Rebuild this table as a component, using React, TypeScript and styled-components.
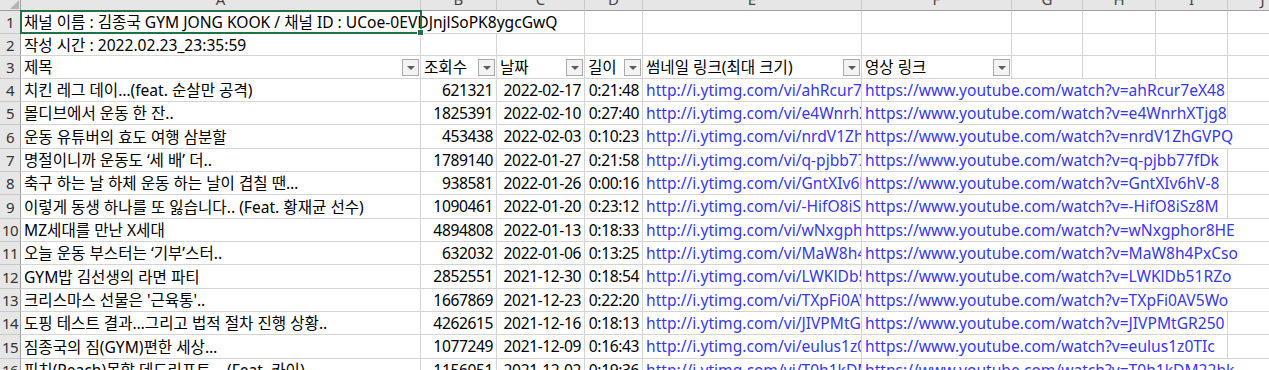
import * as React from "react";
import styled, { createGlobalStyle } from "styled-components";

const GlobalStyle = createGlobalStyle`
  html, body {
    margin: 0;
    padding: 0;
    background: #fff;
    overflow: hidden;
  }
  body {
    font-family: "Noto Sans", "Noto Sans CJK KR", sans-serif;
    font-size: 15.6px;
    color: #000;
  }
`;

const COLUMNS = [
  { key: "A", width: 400 },
  { key: "B", width: 76 },
  { key: "C", width: 88 },
  { key: "D", width: 58 },
  { key: "E", width: 219 },
  { key: "F", width: 150 },
  { key: "G", width: 71 },
  { key: "H", width: 73 },
  { key: "I", width: 72 },
  { key: "J", width: 70 },
];

const ROW_HEIGHTS = [23, 22, 23, ...Array.from({ length: 14 }, (_, i) => [23, 23, 24][i % 3])];

const GRID_COLUMNS = `21px ${COLUMNS.map((c) => `${c.width}px`).join(" ")}`;
const GRID_ROWS = `11px ${ROW_HEIGHTS.map((h) => `${h}px`).join(" ")}`;

type Video = {
  title: string;
  views: string;
  date: string;
  length: string;
  id: string;
};

const VIDEOS: Video[] = [
  { title: "치킨 레그 데이…(feat. 순살만 공격)", views: "621321", date: "2022-02-17", length: "0:21:48", id: "ahRcur7eX48" },
  { title: "몰디브에서 운동 한 잔..", views: "1825391", date: "2022-02-10", length: "0:27:40", id: "e4WnrhXTjg8" },
  { title: "운동 유튜버의 효도 여행 삼분할", views: "453438", date: "2022-02-03", length: "0:10:23", id: "nrdV1ZhGVPQ" },
  { title: "명절이니까 운동도 ‘세 배’ 더..", views: "1789140", date: "2022-01-27", length: "0:21:58", id: "q-pjbb77fDk" },
  { title: "축구 하는 날 하체 운동 하는 날이 겹칠 땐…", views: "938581", date: "2022-01-26", length: "0:00:16", id: "GntXIv6hV-8" },
  { title: "이렇게 동생 하나를 또 잃습니다.. (Feat. 황재균 선수)", views: "1090461", date: "2022-01-20", length: "0:23:12", id: "-HifO8iSz8M" },
  { title: "MZ세대를 만난 X세대", views: "4894808", date: "2022-01-13", length: "0:18:33", id: "wNxgphor8HE" },
  { title: "오늘 운동 부스터는 ‘기부’스터..", views: "632032", date: "2022-01-06", length: "0:13:25", id: "MaW8h4PxCso" },
  { title: "GYM밥 김선생의 라면 파티", views: "2852551", date: "2021-12-30", length: "0:18:54", id: "LWKlDb51RZo" },
  { title: "크리스마스 선물은 '근육통'..", views: "1667869", date: "2021-12-23", length: "0:22:20", id: "TXpFi0AV5Wo" },
  { title: "도핑 테스트 결과…그리고 법적 절차 진행 상황..", views: "4262615", date: "2021-12-16", length: "0:18:13", id: "JIVPMtGR250" },
  { title: "짐종국의 짐(GYM)편한 세상…", views: "1077249", date: "2021-12-09", length: "0:16:43", id: "eulus1z0TIc" },
  { title: "피치(Peach)못할 데드리프트… (Feat. 카이)", views: "1156051", date: "2021-12-02", length: "0:19:36", id: "T0h1kDM22bk" },
];

const HEADERS = ["제목", "조회수", "날짜", "길이", "썸네일 링크(최대 크기)", "영상 링크"];

const Sheet = styled.div`
  display: grid;
  grid-template-columns: ${GRID_COLUMNS};
  grid-template-rows: ${GRID_ROWS};
  width: 1269px;
  height: 370px;
  overflow: hidden;
  background: #fff;
`;

const Corner = styled.div`
  box-sizing: border-box;
  position: relative;
  background: #e6e6e6;
  border-right: 1px solid #9f9f9f;
  border-bottom: 1px solid #9f9f9f;

  svg {
    position: absolute;
    right: 1px;
    bottom: 1px;
  }
`;

const ColumnHeader = styled.div`
  box-sizing: border-box;
  overflow: hidden;
  background: #e6e6e6;
  border-right: 1px solid #c8c8c8;
  border-bottom: 1px solid #9f9f9f;
  color: #444;
  font-size: 15px;
  text-align: center;
`;

const ColumnLabel = styled.div`
  margin-top: -12px;
  line-height: 22px;
`;

const RowHeader = styled.div`
  box-sizing: border-box;
  display: flex;
  align-items: center;
  justify-content: center;
  background: #e6e6e6;
  border-right: 1px solid #9f9f9f;
  border-bottom: 1px solid #c8c8c8;
  color: #333;
  font-size: 15px;
  letter-spacing: -0.5px;
`;

const Cell = styled.div<{ $align?: "left" | "right"; $link?: boolean; $spill?: boolean }>`
  box-sizing: border-box;
  position: relative;
  display: flex;
  align-items: stretch;
  justify-content: ${(p) => (p.$align === "right" ? "flex-end" : "flex-start")};
  min-width: 0;
  padding: 0 3px;
  border-right: 1px solid #d4d4d4;
  border-bottom: 1px solid #d4d4d4;
  background: #fff;
  color: ${(p) => (p.$link ? "#3737f0" : "#000")};
  letter-spacing: ${(p) => (p.$align === "right" ? "-0.4px" : "normal")};
  white-space: nowrap;
  overflow: ${(p) => (p.$spill ? "visible" : "hidden")};
  z-index: ${(p) => (p.$spill ? 1 : "auto")};
`;

const CellText = styled.span`
  display: flex;
  align-items: center;
  flex-shrink: 0;
  padding-bottom: 1px;
  background: #fff;
`;

const FilterButton = styled.span`
  box-sizing: border-box;
  align-self: center;
  flex-shrink: 0;
  width: 17px;
  height: 17px;
  margin: 1px -2px 0 auto;
  border: 1px solid #ababab;
  background: #f3f3f3;
  display: flex;
  align-items: center;
  justify-content: center;

  &::after {
    content: "";
    width: 0;
    height: 0;
    margin-top: 1px;
    border-left: 4px solid transparent;
    border-right: 4px solid transparent;
    border-top: 4px solid #5a5a5a;
  }
`;

const Selection = styled.div`
  box-sizing: border-box;
  position: absolute;
  left: -1px;
  top: -1px;
  width: 402px;
  height: 24px;
  border: 2px solid #217346;
  z-index: 2;
  pointer-events: none;
`;

const FillHandle = styled.div`
  position: absolute;
  right: -4px;
  bottom: -4px;
  width: 5px;
  height: 5px;
  background: #217346;
  border: 1px solid #fff;
`;

const EmptyCells: React.FC<{ from: number }> = ({ from }) => (
  <>
    {COLUMNS.slice(from).map((c) => (
      <Cell key={c.key} />
    ))}
  </>
);

const App: React.FC = () => {
  return (
    <>
      <GlobalStyle />
      <Sheet>
        <Corner>
          <svg width="9" height="9" viewBox="0 0 9 9">
            <polygon points="9,0 9,9 0,9" fill="#b4b4b4" />
          </svg>
        </Corner>
        {COLUMNS.map((c) => (
          <ColumnHeader key={c.key}>
            <ColumnLabel>{c.key}</ColumnLabel>
          </ColumnHeader>
        ))}

        <RowHeader>1</RowHeader>
        <Cell $spill>
          <CellText>채널 이름 : 김종국 GYM JONG KOOK / 채널 ID : UCoe-0EVDJnjlSoPK8ygcGwQ</CellText>
          <Selection>
            <FillHandle />
          </Selection>
        </Cell>
        <EmptyCells from={1} />

        <RowHeader>2</RowHeader>
        <Cell>
          <CellText>작성 시간 : 2022.02.23_23:35:59</CellText>
        </Cell>
        <EmptyCells from={1} />

        <RowHeader>3</RowHeader>
        {HEADERS.map((h) => (
          <Cell key={h}>
            <CellText>{h}</CellText>
            <FilterButton />
          </Cell>
        ))}
        <EmptyCells from={HEADERS.length} />

        {VIDEOS.map((v, i) => (
          <React.Fragment key={v.id}>
            <RowHeader>{i + 4}</RowHeader>
            <Cell>
              <CellText>{v.title}</CellText>
            </Cell>
            <Cell $align="right">
              <CellText>{v.views}</CellText>
            </Cell>
            <Cell $align="right">
              <CellText>{v.date}</CellText>
            </Cell>
            <Cell $align="right">
              <CellText>{v.length}</CellText>
            </Cell>
            <Cell $link>
              <CellText>{`http://i.ytimg.com/vi/${v.id}/maxresdefault.jpg`}</CellText>
            </Cell>
            <Cell $link $spill>
              <CellText>{`https://www.youtube.com/watch?v=${v.id}`}</CellText>
            </Cell>
            <EmptyCells from={6} />
          </React.Fragment>
        ))}
      </Sheet>
    </>
  );
};

export default App;
